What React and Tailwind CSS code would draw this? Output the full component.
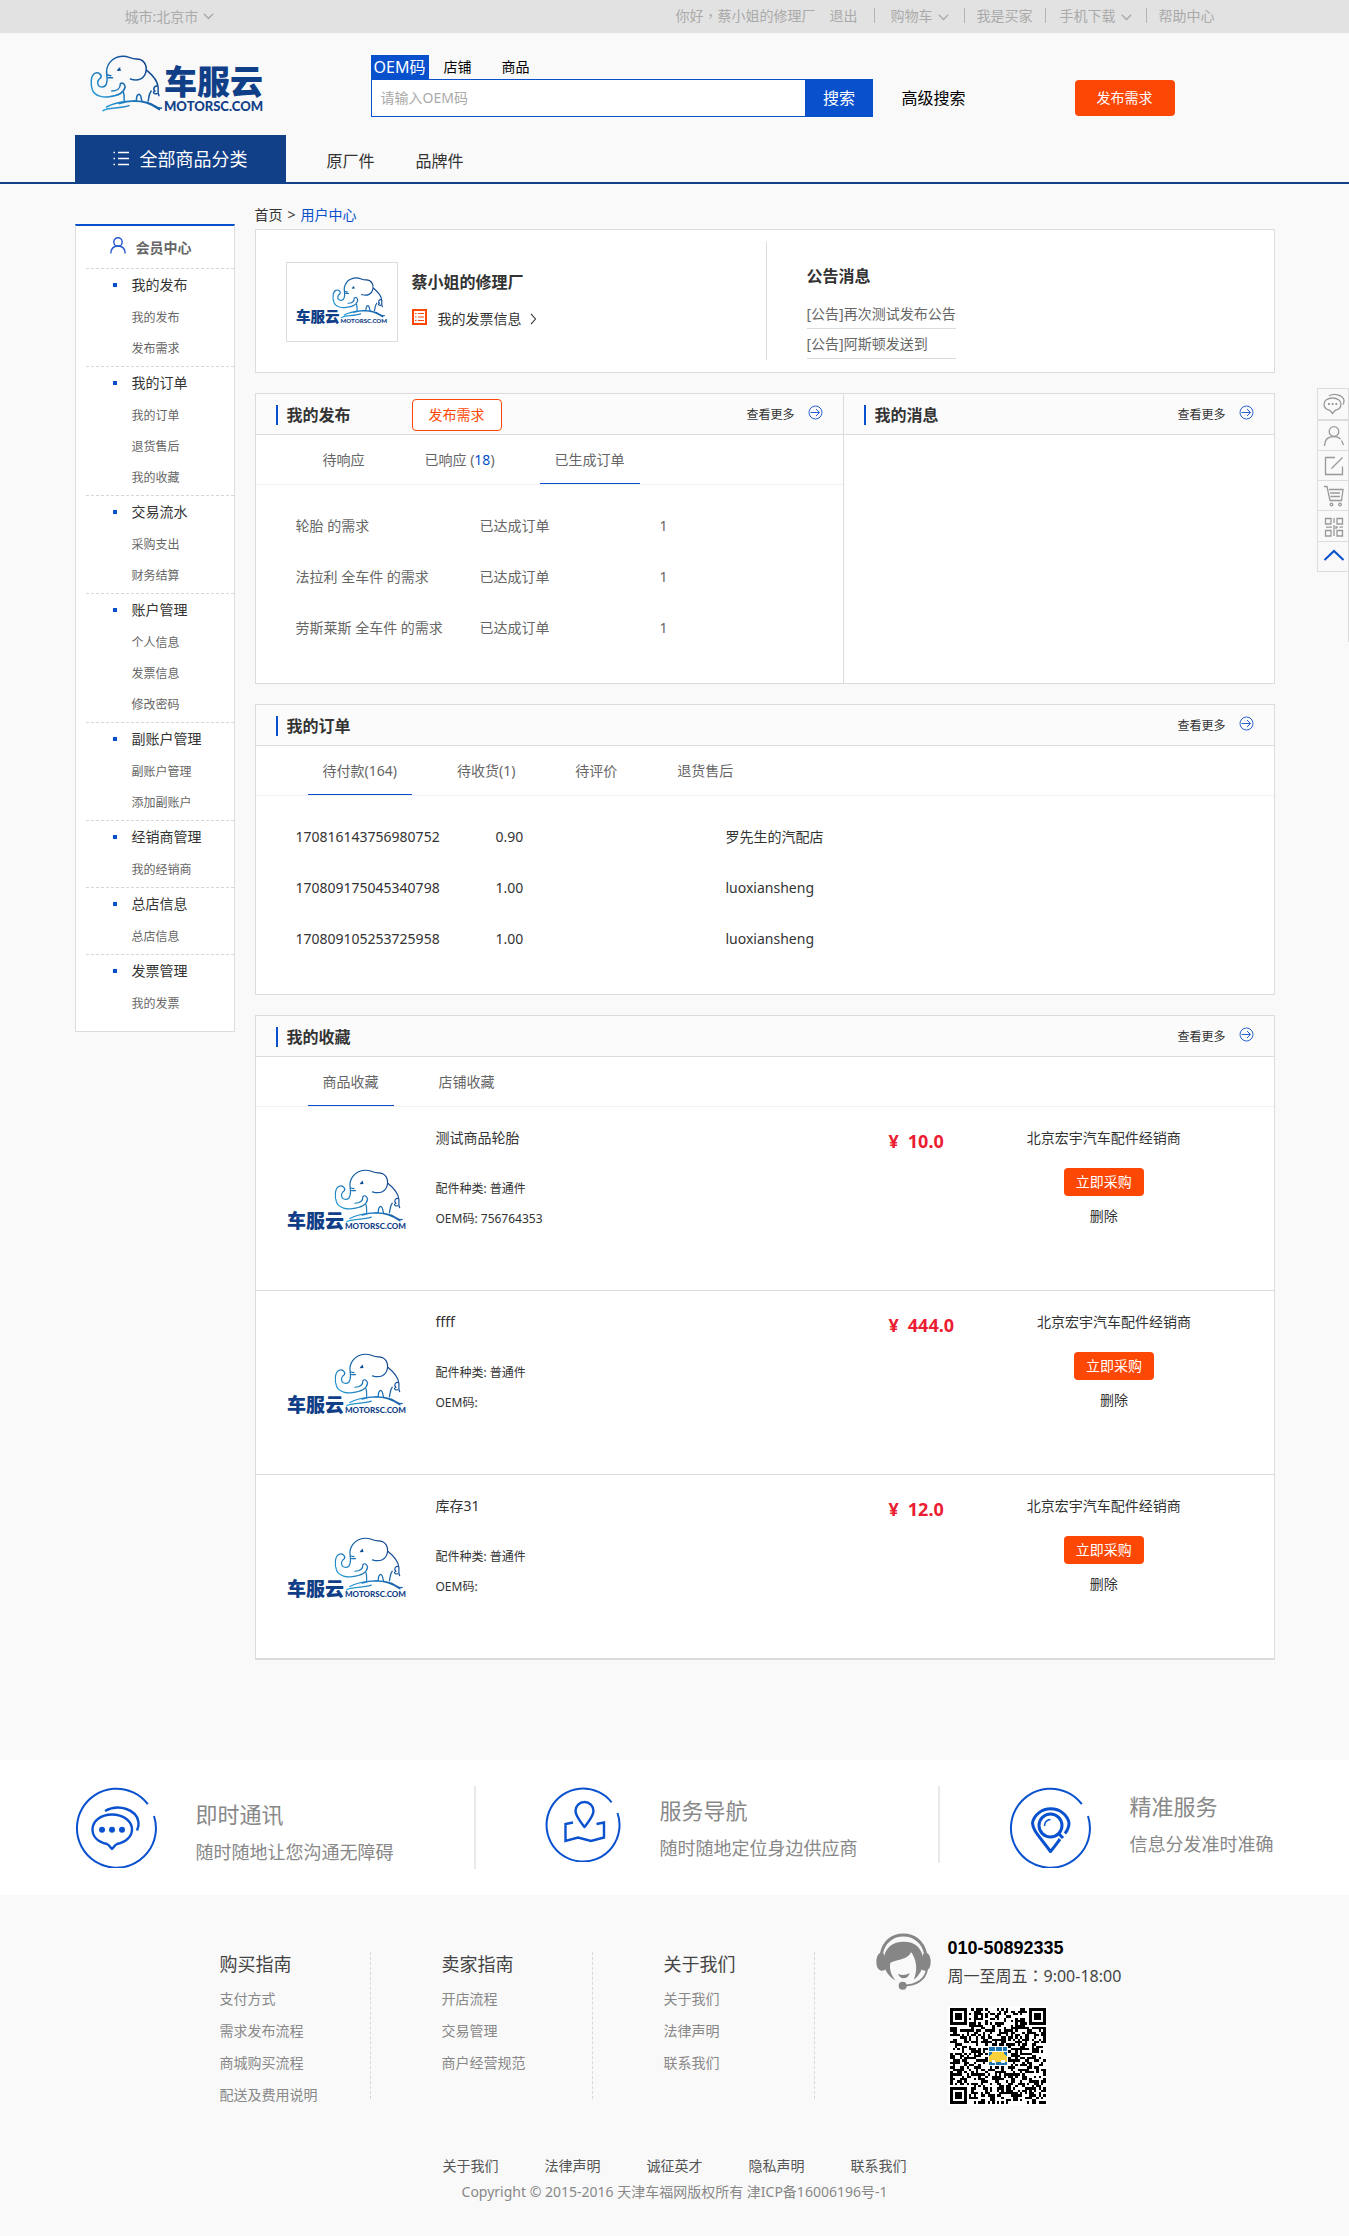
import React from "react";

const SIDEBAR = [
  { title: "我的发布", items: ["我的发布", "发布需求"] },
  { title: "我的订单", items: ["我的订单", "退货售后", "我的收藏"] },
  { title: "交易流水", items: ["采购支出", "财务结算"] },
  { title: "账户管理", items: ["个人信息", "发票信息", "修改密码"] },
  { title: "副账户管理", items: ["副账户管理", "添加副账户"] },
  { title: "经销商管理", items: ["我的经销商"] },
  { title: "总店信息", items: ["总店信息"] },
  { title: "发票管理", items: ["我的发票"] },
];

const DEMANDS = [
  ["轮胎 的需求", "已达成订单", "1"],
  ["法拉利 全车件 的需求", "已达成订单", "1"],
  ["劳斯莱斯 全车件 的需求", "已达成订单", "1"],
];

const ORDERS = [
  ["170816143756980752", "0.90", "罗先生的汽配店"],
  ["170809175045340798", "1.00", "luoxiansheng"],
  ["170809105253725958", "1.00", "luoxiansheng"],
];

const PRODUCTS = [
  { name: "测试商品轮胎", oem: "756764353", price: "10.0" },
  { name: "ffff", oem: "", price: "444.0" },
  { name: "库存31", oem: "", price: "12.0" },
];

const GUIDES = [
  { title: "购买指南", items: ["支付方式", "需求发布流程", "商城购买流程", "配送及费用说明"] },
  { title: "卖家指南", items: ["开店流程", "交易管理", "商户经营规范"] },
  { title: "关于我们", items: ["关于我们", "法律声明", "联系我们"] },
];

const BRAND_FONT = '"Noto Sans CJK SC", sans-serif';
const LATIN_FONT = '"Lato", "Open Sans", sans-serif';

/* ---------- drawings ---------- */

function Elephant({ id, stroke }) {
  return (
    <>
      <defs>
        <linearGradient id={id} x1="208" y1="300" x2="345" y2="190" gradientUnits="userSpaceOnUse">
          <stop offset="0" stopColor="#2ba3dc" />
          <stop offset="0.55" stopColor="#1766ad" />
          <stop offset="1" stopColor="#103f88" />
        </linearGradient>
      </defs>
      <g fill="none" stroke={`url(#${id})`} strokeWidth={stroke} strokeLinecap="round" strokeLinejoin="round">
        <path vectorEffect="non-scaling-stroke" d="M245 226C241 200 254 172 281 170C294 169 300 178 312 178C330 177 338 196 335 216C332 236 318 246 299 238" />
        <path vectorEffect="non-scaling-stroke" d="M337 212C352 228 362 246 363 262C364 274 361 280 365 288M362 258C354 258 350 268 356 274C350 276 352 284 360 282" />
        <path vectorEffect="non-scaling-stroke" d="M245 226C247 246 244 262 235 262C223 262 219 246 231 234C234 226 226 216 217 221C207 228 207 256 212 272C218 290 238 294 250 291C266 289 284 282 287 262C286 252 281 248 276 252C276 266 268 274 256 274" />
        <path vectorEffect="non-scaling-stroke" d="M248 234H258M247 226L254 228M283 278C286 288 284 296 285 304M313 304C313 290 314 284 320 284C325 288 323 296 326 304M347 274C341 284 342 296 340 304" />
        <path vectorEffect="non-scaling-stroke" d="M236 333C246 322 274 328 296 318M244 322C270 304 318 298 346 312C358 320 362 328 371 325M274 312C310 296 342 308 366 330" />
      </g>
      <path d="M268 214C270 207 274 203 276 203C275 208 277 211 278 213Z" fill="#14539b" />
    </>
  );
}

function HeaderLogo() {
  return (
    <svg className="overflow-visible" width="174" height="62" viewBox="0 0 174 62" role="img" aria-label="车服云 MOTORSC.COM">
      <g transform="scale(0.4337 0.3333) translate(-206 -166)">
        <Elephant id="headerElephant" stroke="1.5" />
      </g>
      <text x="74" y="39" fill="#103f88" fontFamily={BRAND_FONT} fontSize="33" fontWeight="900">车服云</text>
      <text x="74" y="56" fill="#103f88" fontFamily={LATIN_FONT} fontSize="13" fontWeight="900">MOTORSC.COM</text>
    </svg>
  );
}

function StackedLogo({ id, className }) {
  return (
    <svg className={className} viewBox="0 0 120 66" role="img" aria-label="车服云 MOTORSC.COM">
      <g transform="translate(48 0) scale(0.412 0.317) translate(-208 -166)">
        <Elephant id={id} stroke="1.2" />
      </g>
      <text x="0" y="59" fill="#103f88" fontFamily={BRAND_FONT} fontSize="19" fontWeight="900">车服云</text>
      <text x="58" y="60" fill="#103f88" fontFamily={LATIN_FONT} fontSize="8" fontWeight="900">MOTORSC.COM</text>
    </svg>
  );
}

function Chevron({ className }) {
  return (
    <svg className={className} width="11" height="7" viewBox="0 0 11 7" fill="none" stroke="currentColor" strokeWidth="1.4" aria-hidden="true">
      <path d="M0.8 0.8L5.5 5.5L10.2 0.8" />
    </svg>
  );
}

function ArrowCircle() {
  return (
    <svg width="15" height="15" viewBox="0 0 15 15" fill="none" stroke="#2b62d3" strokeWidth="1" aria-hidden="true">
      <circle cx="7.5" cy="7.5" r="6.5" />
      <path d="M2.5 7.5H11.5M8 4L11.5 7.5L8 11" />
    </svg>
  );
}

function Headset() {
  return (
    <svg width="55" height="57" viewBox="109 67 165 171" aria-hidden="true">
      <g fill="none" stroke="#868686" strokeLinecap="round">
        <path d="M125 130C132 92 160 73 191 73S250 92 258 130" strokeWidth="9" />
        <path d="M262 176C256 208 228 223 192 225" strokeWidth="6" />
      </g>
      <g fill="#868686">
        <path d="M122 126Q132 124 134 134L140 172Q136 182 124 180Q110 176 110 154Q110 132 122 126Z" />
        <path d="M261 126Q251 124 249 134L243 172Q247 182 259 180Q273 176 273 154Q273 132 261 126Z" />
        <path d="M132 150C133 110 160 93 192 93C225 93 249 110 251 150C251 175 238 196 222 207C234 180 232 148 214 124C206 146 176 146 152 156C148 176 156 196 168 209C146 198 132 176 132 150Z" />
        <path d="M175 189Q192 198 210 187Q206 203 191 203Q180 202 175 189Z" />
        <circle cx="189" cy="225" r="12" />
      </g>
    </svg>
  );
}

const QR_SIZE = 41;

function buildQrPath() {
  let seed = 20177;
  let d = "";
  const last = QR_SIZE - 8;
  for (let y = 0; y < QR_SIZE; y++) {
    for (let x = 0; x < QR_SIZE; x++) {
      seed = (seed * 1103515245 + 12345) % 2147483648;
      const inFinder = (x < 8 && y < 8) || (x >= last && y < 8) || (x < 8 && y >= last);
      const inLogo = x > 15 && x < 25 && y > 15 && y < 25;
      if (!inFinder && !inLogo && (seed >> 12) % 100 < 50) d += `M${x} ${y}h1v1h-1z`;
    }
  }
  const far = QR_SIZE - 7;
  [[0, 0], [far, 0], [0, far]].forEach(([x, y]) => {
    d += `M${x} ${y}h7v7h-7zM${x + 1} ${y + 1}v5h5v-5zM${x + 2} ${y + 2}h3v3h-3z`;
  });
  return d;
}

const QR_PATH = buildQrPath();

function QrCode() {
  return (
    <svg width="100" height="100" viewBox="-1 -1 43 43" className="bg-white" shapeRendering="crispEdges" role="img" aria-label="二维码">
      <path d={QR_PATH} fill="#000" fillRule="evenodd" />
      <rect x="16.5" y="16.5" width="8" height="8" fill="#1c75b3" />
      <path d="M16.5 18.5h8M19.5 16.5v8M22.5 16.5v3" stroke="#fff" strokeWidth="0.4" />
      <path d="M16.8 23v-2.4l1.6-2h4.2l1.8 2.2V23z" fill="#fbd03b" />
      <path d="M18 22.2h1.4v1.4H18zM22 22.2h1.4v1.4H22z" fill="#fff" />
    </svg>
  );
}

const blueLine = { fill: "none", stroke: "#0a51cf", strokeLinecap: "butt", strokeLinejoin: "round" };

function ChatCircle() {
  return (
    <svg width="82" height="82" viewBox="0 0 82 82" {...blueLine} strokeWidth="2.4" aria-hidden="true">
      <path d="M79 30A39.5 39.5 0 1 1 72.8 18.2" strokeWidth="2" />
      <path d="M32 58C23 56 17.5 50.5 17.5 43.5C17.5 35 26 28.5 37 28.5S57 35 57 43.5C57 50.5 51 56 42 58C39.5 59 39 61 37 63C35 61 34.5 59 32 58Z" />
      <path d="M30 25C44 17 62 24 63.5 36C64 39 63 42 62 44.5" />
      <g fill="#0a51cf" stroke="none">
        <circle cx="27" cy="43.7" r="3" />
        <circle cx="37" cy="43.7" r="3" />
        <circle cx="47" cy="43.7" r="3" />
      </g>
    </svg>
  );
}

function MapCircle() {
  return (
    <svg width="76" height="76" viewBox="0 0 76 76" {...blueLine} strokeWidth="2.4" aria-hidden="true">
      <path d="M72.5 27A36.5 36.5 0 1 1 66.6 16.3" strokeWidth="2" />
      <path d="M39.5 41C35 35 30.5 30 30.5 25A9 9 0 0 1 48.5 25C48.5 30 44 35 39.5 41Z" />
      <path d="M28 36.5L20.5 38V55L33 51.5L46 55L59 51.5V36.5L51.5 38" strokeLinejoin="miter" />
    </svg>
  );
}

function PinCircle() {
  return (
    <svg width="82" height="82" viewBox="0 0 82 82" {...blueLine} strokeWidth="3" aria-hidden="true">
      <path d="M79 30A39.5 39.5 0 1 1 72.8 18.2" strokeWidth="2" />
      <path d="M56 47.5C59 43.5 60 40 60 37A18.5 17 0 0 0 23.5 37C23.5 44 30 50 41.5 65.5C46 60 48 57 51 53" />
      <circle cx="41.5" cy="39.5" r="11.5" />
      <path d="M49.5 47.5L54 52" />
      <path d="M35.5 40A6 6 0 0 1 41.5 33.5" strokeWidth="1.6" />
    </svg>
  );
}

/* ---------- shared pieces ---------- */

function MoreLink() {
  return (
    <a href="#more" className="ml-auto mr-5 flex items-center gap-[13px] text-xs text-[#333]">
      查看更多
      <span className="pb-1.5"><ArrowCircle /></span>
    </a>
  );
}

function PanelHead({ title, children }) {
  return (
    <div className="flex h-[41px] items-center border-b border-[#dcdcdc] bg-[#fbfbfb] pt-0.5">
      <h2 className="ml-5 flex items-center text-base font-bold text-[#333]">
        <span className="mr-[9px] h-5 w-0.5 bg-[#0850cc]" />
        {title}
      </h2>
      {children}
      <MoreLink />
    </div>
  );
}

function Tabs({ tabs, active }) {
  return (
    <div className="flex h-[50px] gap-[30px] border-b border-[#f1f1f1] pl-[52px]">
      {tabs.map((tab, i) => (
        <button
          type="button"
          key={i}
          className={
            i === active
              ? "border-b border-[#0850cc] px-[15px] pt-0.5 text-sm text-[#666]"
              : "border-b border-transparent px-[15px] pt-0.5 text-sm text-[#666]"
          }
        >
          {tab}
        </button>
      ))}
    </div>
  );
}

function CenteredMark({ children }) {
  return <span className="font-['Noto_Sans_CJK_TC',sans-serif]">{children}</span>;
}

function TopBar() {
  const sep = "h-[15px] w-px bg-[#b4b4b4]";
  return (
    <div className="bg-[#e2e2e2] text-sm text-[#aaa]">
      <div className="mx-auto flex h-[33px] max-w-[1200px] items-center justify-between pl-[50px] pr-[60px]">
        <a href="#city" className="flex items-center gap-[5px]">城市:北京市<Chevron /></a>
        <div className="flex items-center pb-0.5">
          <span>你好<CenteredMark>，</CenteredMark>蔡小姐的修理厂</span>
          <a href="#logout" className="ml-3.5 mr-4">退出</a>
          <span className={sep} />
          <a href="#cart" className="ml-4 mr-[15px] flex items-center gap-[5px]">购物车<Chevron className="mt-1" /></a>
          <span className={sep} />
          <a href="#buyer" className="mx-3">我是买家</a>
          <span className={sep} />
          <a href="#app" className="mx-3.5 flex items-center gap-[5px]">手机下载<Chevron className="mt-1" /></a>
          <span className={sep} />
          <a href="#help" className="ml-3">帮助中心</a>
        </div>
      </div>
    </div>
  );
}

function Header() {
  return (
    <header className="border-b-2 border-[#113f88]">
      <div className="mx-auto max-w-[1200px]">
        <div className="flex h-[102px] items-start">
          <a href="#home" className="ml-[15px] mt-[22px] block"><HeaderLogo /></a>
          <form className="ml-[107px] mt-[22px] w-[502px]" onSubmit={(e) => e.preventDefault()}>
            <div className="flex h-6 items-stretch text-sm text-black">
              <button type="button" className="w-[58px] bg-[#0850cc] text-base leading-6 text-white">OEM码</button>
              <button type="button" className="ml-[15px]">店铺</button>
              <button type="button" className="ml-[30px]">商品</button>
            </div>
            <div className="flex h-[38px]">
              <input
                type="text"
                aria-label="OEM码"
                placeholder="请输入OEM码"
                className="min-w-0 flex-1 border border-[#0850cc] bg-white px-[9px] text-sm outline-none placeholder:text-[#aaa]"
              />
              <button type="submit" className="w-[67px] bg-[#0850cc] text-base text-white">搜索</button>
            </div>
          </form>
          <a href="#advanced" className="ml-[29px] mt-[53px] text-base text-black">高级搜索</a>
          <button type="button" className="ml-auto mr-[100px] mt-[47px] h-9 w-[100px] rounded bg-[#fd4705] text-sm text-white">发布需求</button>
        </div>
        <nav className="flex h-[47px] items-stretch text-base text-[#333]">
          <a href="#all" className="flex w-[211px] items-center gap-[11px] bg-[#113f88] pl-[38px] text-lg text-white">
            <svg width="16" height="15" viewBox="0 0 16 15" stroke="#fff" strokeWidth="1.5" aria-hidden="true">
              <path d="M5 1.5H16M5 7.5H16M5 13.5H16M0.5 1.5H2M0.5 7.5H2M0.5 13.5H2" />
            </svg>
            全部商品分类
          </a>
          <a href="#oem" className="ml-[41px] flex items-center pt-1">原厂件</a>
          <a href="#brand" className="ml-[41px] flex items-center pt-1">品牌件</a>
        </nav>
      </div>
    </header>
  );
}

function Sidebar() {
  return (
    <aside className="mt-10 w-40 shrink-0 self-start border border-t-2 border-[#dcdcdc] border-t-[#0850cc] bg-white pb-2.5">
      <h2 className="flex h-[42px] items-center gap-2.5 pl-[34px] pt-0.5 text-sm font-bold text-[#666]">
        <svg className="mb-1.5" width="16" height="17" viewBox="0 0 16 17" fill="none" stroke="#2457d0" strokeWidth="1.4" aria-hidden="true">
          <circle cx="8" cy="5" r="4.2" />
          <path d="M0.8 16.5C1 11.5 4 9 8 9S15 11.5 15.2 16.5" />
        </svg>
        会员中心
      </h2>
      {SIDEBAR.map((group) => (
        <section key={group.title} className="ml-2.5 border-t border-dashed border-[#d6d6d6] pb-0.5">
          <h3 className="flex h-[33px] items-center pb-0.5 text-sm text-[#333]">
            <span className="ml-[27px] mr-[15px] h-1 w-1 bg-[#0850cc]" />
            {group.title}
          </h3>
          <ul>
            {group.items.map((item) => (
              <li key={item} className="h-[31px] pl-[46px] text-xs leading-[31px] text-[#666]">
                <a href="#item">{item}</a>
              </li>
            ))}
          </ul>
        </section>
      ))}
    </aside>
  );
}

function Profile() {
  return (
    <section className="flex h-36 border border-[#dcdcdc] bg-white">
      <div className="flex flex-1 pl-[30px] pt-8">
        <div className="flex h-20 w-28 items-center justify-center border border-[#dcdcdc]">
          <StackedLogo id="profileElephant" className="w-[92px]" />
        </div>
        <div className="ml-3.5 pt-2">
          <h1 className="text-base font-bold leading-6 text-[#333]">蔡小姐的修理厂</h1>
          <a href="#invoice" className="mt-[15px] flex items-center text-sm text-[#333]">
            <svg className="mb-1" width="15" height="16" viewBox="0 0 15 16" fill="none" stroke="#fd4705" aria-hidden="true">
              <rect x="1" y="1" width="13" height="14" strokeWidth="2" />
              <path d="M3 4.5H4.5M6 4.5H12M3 8H4.5M6 8H12M3 11.5H4.5M6 11.5H12" strokeWidth="1.2" />
            </svg>
            <span className="ml-[11px]">我的发票信息</span>
            <svg className="ml-2" width="7" height="12" viewBox="0 0 7 12" fill="none" stroke="#333" strokeWidth="1.1" aria-hidden="true">
              <path d="M1 0.8L5.5 6L1 11.2" />
            </svg>
          </a>
        </div>
      </div>
      <div className="my-3 w-[508px] border-l border-[#dcdcdc] pl-10 pt-[22px]">
        <h2 className="text-base font-bold leading-6 text-[#333]">公告消息</h2>
        <ul className="mt-[11px] inline-block text-sm leading-[29px] text-[#666]">
          <li className="border-b border-[#dcdcdc]"><a href="#n1">[公告]再次测试发布公告</a></li>
          <li className="border-b border-[#dcdcdc]"><a href="#n2">[公告]阿斯顿发送到</a></li>
        </ul>
      </div>
    </section>
  );
}

function Product({ product, index }) {
  return (
    <li className="flex h-[184px] border-b border-[#dcdcdc] text-sm text-[#333]">
      <StackedLogo id={`productElephant${index}`} className="ml-[31px] mt-[62px] h-[66px] w-[120px]" />
      <div className="ml-[29px] w-[453px] pt-[19px]">
        <h3 className="leading-6">{product.name}</h3>
        <p className="mt-[27px] text-xs leading-6">配件种类: 普通件</p>
        <p className="mt-1.5 text-xs leading-6">OEM码: {product.oem}</p>
      </div>
      <p className="flex gap-[9px] pt-[22px] text-lg font-bold leading-6 text-[#ec1c33]">
        <span>¥</span>
        <span>{product.price}</span>
      </p>
      <div className="ml-[83px] flex flex-col items-center pt-[19px]">
        <a href="#store" className="leading-6">北京宏宇汽车配件经销商</a>
        <button type="button" className="mt-[18px] h-7 w-20 rounded bg-[#fd4705] text-white">立即采购</button>
        <button type="button" className="mt-2 leading-6">删除</button>
      </div>
    </li>
  );
}

function Main() {
  return (
    <main className="ml-5 min-w-0 flex-1">
      <nav className="flex h-[45px] items-center gap-[5px] pt-4 text-sm text-[#333]">
        <a href="#home">首页</a>
        <span>&gt;</span>
        <a href="#center" className="text-[#0850cc]">用户中心</a>
      </nav>
      <Profile />

      <div className="mt-5 flex border border-[#dcdcdc] bg-white">
        <section className="flex-1 border-r border-[#dcdcdc]">
          <PanelHead title="我的发布">
            <button type="button" className="ml-[61px] h-8 w-[90px] rounded border border-[#fd4705] bg-white text-sm text-[#fd4705]">发布需求</button>
          </PanelHead>
          <Tabs active={2} tabs={["待响应", <>已响应 (<span className="text-[#0850cc]">18</span>)</>, "已生成订单"]} />
          <table className="mb-[30px] ml-10 mt-[15px] table-fixed text-left text-sm text-[#666]">
            <tbody>
              {DEMANDS.map(([name, state, count]) => (
                <tr key={name} className="h-[51px]">
                  <td className="w-[184px]">{name}</td>
                  <td className="w-[180px]">{state}</td>
                  <td className="w-10">{count}</td>
                </tr>
              ))}
            </tbody>
          </table>
        </section>
        <section className="w-[430px]">
          <PanelHead title="我的消息" />
        </section>
      </div>

      <section className="mt-5 border border-[#dcdcdc] bg-white">
        <PanelHead title="我的订单" />
        <Tabs active={0} tabs={["待付款(164)", "待收货(1)", "待评价", "退货售后"]} />
        <table className="mb-[30px] ml-10 mt-[15px] table-fixed text-left text-sm text-[#333]">
          <tbody>
            {ORDERS.map(([id, amount, shop]) => (
              <tr key={id} className="h-[51px]">
                <td className="w-[200px]">{id}</td>
                <td className="w-[230px]">{amount}</td>
                <td className="w-[200px]">{shop}</td>
              </tr>
            ))}
          </tbody>
        </table>
      </section>

      <section className="mt-5 border border-[#dcdcdc] bg-white">
        <PanelHead title="我的收藏" />
        <Tabs active={0} tabs={["商品收藏", "店铺收藏"]} />
        <ul>
          {PRODUCTS.map((product, i) => (
            <Product key={product.name} product={product} index={i} />
          ))}
        </ul>
      </section>
    </main>
  );
}

function Feature({ icon, title, text, className }) {
  return (
    <div className="flex shrink-0 items-start gap-[39px]">
      {icon}
      <div className={className}>
        <h3 className="text-[22px] leading-8">{title}</h3>
        <p className="mt-1.5 text-lg leading-8">{text}</p>
      </div>
    </div>
  );
}

function Features() {
  return (
    <section className="mt-[100px] bg-white">
      <div className="mx-auto flex h-[135px] max-w-[1200px] items-start pt-[26px]">
        <Feature icon={<ChatCircle />} title="即时通讯" text="随时随地让您沟通无障碍" className="whitespace-nowrap pt-3 text-[#888]" />
        <span className="ml-20 mr-[69px] h-[83px] w-0.5 bg-[#e9e9e9]" />
        <Feature icon={<MapCircle />} title="服务导航" text="随时随地定位身边供应商" className="whitespace-nowrap pt-2 text-[#888]" />
        <span className="ml-20 mr-[69px] h-[77px] w-0.5 bg-[#e9e9e9]" />
        <Feature icon={<PinCircle />} title="精准服务" text="信息分发准时准确" className="whitespace-nowrap pt-1 text-[#888]" />
      </div>
    </section>
  );
}

function Footer() {
  return (
    <footer>
      <div className="mx-auto flex max-w-[1200px] items-start pl-[145px] pt-[38px]">
        {GUIDES.map((guide) => (
          <section key={guide.title} className="mr-[71px] mt-[19px] h-[147px] w-[151px] border-r border-dashed border-[#d9d9d9]">
            <h3 className="text-lg leading-6 text-[#444]">{guide.title}</h3>
            <ul className="mt-[7px] text-sm leading-8 text-[#888]">
              {guide.items.map((item) => (
                <li key={item}><a href="#guide">{item}</a></li>
              ))}
            </ul>
          </section>
        ))}
        <div className="-ml-2.5 flex">
          <Headset />
          <div className="ml-[17px]">
            <p className="font-[Liberation_Sans] text-lg font-bold leading-[30px] text-black">010-50892335</p>
            <p className="text-base leading-6 text-[#444]">周一至周五<CenteredMark>：</CenteredMark>9:00-18:00</p>
            <div className="mt-[18px]"><QrCode /></div>
          </div>
        </div>
      </div>
      <div className="mt-12 flex justify-center gap-[46px] text-sm leading-6 text-[#555]">
        {["关于我们", "法律声明", "诚征英才", "隐私声明", "联系我们"].map((t) => (
          <a key={t} href="#about">{t}</a>
        ))}
      </div>
      <p className="mt-0.5 pb-9 text-center text-sm leading-6 text-[#888]">
        Copyright © 2015-2016 天津车福网版权所有 津ICP备16006196号-1
      </p>
    </footer>
  );
}

function ToolRail() {
  const cell = "flex h-[30px] items-center justify-center border-b border-[#dcdcdc] pl-0.5";
  const icon = { width: 22, height: 22, viewBox: "0 0 22 22", fill: "none", stroke: "#999", strokeWidth: 1.3, "aria-hidden": true };
  return (
    <div className="absolute right-0 top-[388px] h-[254px] border-r border-[#dcdcdc]">
      <div className="flex w-[31px] flex-col border-l border-t border-[#dcdcdc] bg-[#f9f9f9]">
        <button type="button" aria-label="在线咨询" className="flex h-8 items-center justify-center border-b-2 border-[#dcdcdc] pl-0.5">
          <svg {...icon}>
            <path d="M7 17.5C3 16.5 1 14 1 11C1 7.5 4.5 5 9.5 5S18 7.5 18 11C18 14 16 16.5 12 17.5L9.5 20.5Z" />
            <path d="M6 2.8C12 -0.5 20.5 2.5 21 7.5C21 9 21 10 20 11.5" />
            <path d="M5 11H6.8M8.7 11H10.5M12.4 11H14.2" strokeWidth="2" />
          </svg>
        </button>
        <button type="button" aria-label="会员中心" className={cell}>
          <svg {...icon}>
            <circle cx="11" cy="6.5" r="4.8" />
            <path d="M1.5 21C1.5 14.5 5.5 11.5 11 11.5C14 11.5 16 12.5 17.5 14M18.5 15.5L20.5 20" />
          </svg>
        </button>
        <button type="button" aria-label="发布需求" className={cell}>
          <svg {...icon}>
            <path d="M12 2.5H2.5V19.5H19.5V11.5M8.5 13.5L19.5 2.5" />
          </svg>
        </button>
        <button type="button" aria-label="购物车" className={cell}>
          <svg {...icon}>
            <path d="M1 1.5H4L7 15.5H18.5L20 4.5H6M7 8H17M7.5 11.5H17" />
            <circle cx="8.5" cy="19.5" r="1.3" />
            <circle cx="17" cy="19.5" r="1.3" />
          </svg>
        </button>
        <button type="button" aria-label="二维码" className="flex h-[31px] items-center justify-center border-b border-[#dcdcdc] pl-0.5 pt-0.5">
          <svg {...icon}>
            <path d="M2.5 2.5H8V8H2.5ZM14 2.5H19.5V8H14ZM2.5 14.5H8V20H2.5ZM14 14.5H19.5V20H14ZM11 2V7M11 9V20M3 11.2H9M13 11.2H15M16.5 11.2H20M13 10V13" />
          </svg>
        </button>
        <button type="button" aria-label="返回顶部" className={cell}>
          <svg {...icon} stroke="#0850cc" strokeWidth="2">
            <path d="M1.5 14L11 5L20.5 14" />
          </svg>
        </button>
      </div>
    </div>
  );
}

export default function App() {
  return (
    <div className="relative min-w-[1200px] bg-[#f9f9f9] font-['Noto_Sans','Noto_Sans_CJK_SC',sans-serif]">
      <TopBar />
      <Header />
      <div className="mx-auto flex max-w-[1200px]">
        <Sidebar />
        <Main />
      </div>
      <Features />
      <Footer />
      <ToolRail />
    </div>
  );
}
